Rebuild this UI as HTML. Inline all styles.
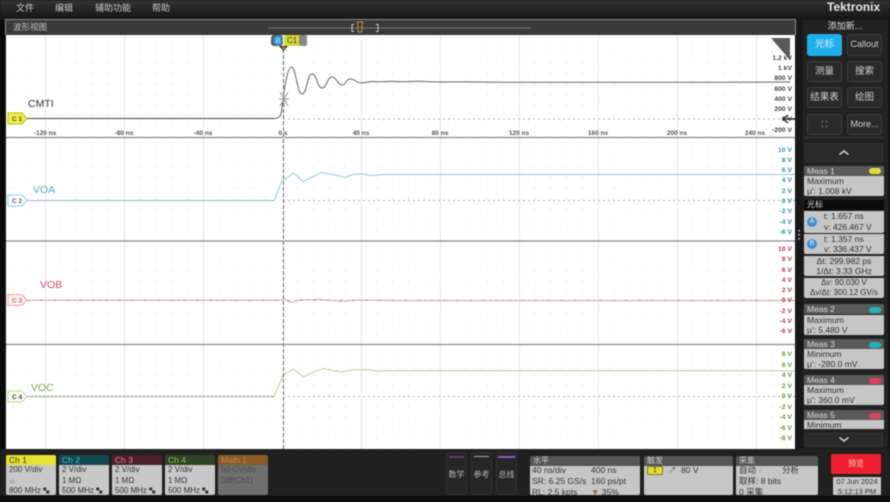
<!DOCTYPE html>
<html><head><meta charset="utf-8"><style>
*{box-sizing:border-box}
html,body{margin:0;padding:0;background:#0b0b0b}
#r{position:relative;width:890px;height:502px;overflow:hidden;background:#181818;font-family:"Liberation Sans","Noto Sans CJK SC",sans-serif;filter:blur(.5px);color:#ddd}
#r div{position:absolute;white-space:nowrap}
.m{top:1px;font-size:9px;color:#c8c8c8;line-height:14px}
.b{width:35px;height:21px;background:#2a2a2a;border:1px solid #3c3c3c;border-radius:3px;color:#cfcfcf;font-size:9.500px;line-height:19px;text-align:center}
.h{left:804px;width:80px;height:10px;background:#5a5a5a;color:#ddd;font-size:8.500px;line-height:10px;padding-left:3px;border-radius:2px 2px 0 0}
.c{left:804px;width:80px;background:#c6c6c6;color:#333;font-size:8.500px;line-height:10px;padding:0 3px;border-radius:0 0 2px 2px}
.pill{left:869px;width:12px;height:6px;border-radius:3px}
.chh{top:455px;height:10px;font-size:8.500px;line-height:10px;padding-left:3px;border-radius:2px 2px 0 0}
.chb{top:465px;height:30px;background:#c8c8c8;color:#333;font-size:8px;line-height:10.500px;padding:0 3px;border-radius:0 0 2px 2px}
.sb{top:452px;width:21px;height:43px;background:#262626;border:1px solid #333;border-radius:3px;color:#bbb;font-size:8px;text-align:center;line-height:43px}
.bh{top:456px;height:10px;background:#555;color:#ccc;font-size:8px;line-height:10px;padding-left:3px;border-radius:2px 2px 0 0}
.bb{top:466px;height:29px;background:#c6c6c6;color:#333;font-size:8.500px;line-height:11px;border-radius:0 0 2px 2px;overflow:hidden}
</style></head><body><div id="r">
<div style="left:0;top:0;width:890px;height:19px;background:linear-gradient(#333,#161616)"></div>
<div class="m" style="left:16px">文件</div><div class="m" style="left:55px">编辑</div><div class="m" style="left:95px">辅助功能</div><div class="m" style="left:152px">帮助</div>
<div style="left:827px;top:0;font-size:12px;font-weight:bold;color:#e8e8e8;line-height:15px">Tektronix</div>
<div style="left:5px;top:19px;width:791px;height:16px;background:#3a3a3a;border:1px solid #8a8a8a;border-bottom:0"></div>
<div style="left:13px;top:22px;font-size:8.500px;line-height:11px;color:#c4c4c4">波形视图</div>

<svg style="position:absolute;left:0;top:0" width="890" height="502" viewBox="0 0 890 502">
<defs><pattern id="d" x="13" y="42" width="15.800" height="10.400" patternUnits="userSpaceOnUse"><rect width="1" height="1" fill="#d8d8d8"/></pattern></defs>
<line x1="268" y1="28" x2="531" y2="28" stroke="#777" stroke-width="1"/>
<path d="M354 24.500h-2v7h2M376 24.500h2v7h-2" fill="none" stroke="#ccc"/>
<path d="M357 22h6l-1 3v7h-4v-7z" fill="none" stroke="#c98a3a" stroke-width="1"/>
<rect x="6" y="35" width="789" height="414" fill="#fff"/>
<rect x="6" y="35" width="789" height="414" fill="url(#d)"/>
<g stroke="#e6e6e6" stroke-width="1"><path d="M45.500 35V449M124.500 35V449M203.500 35V449M361.500 35V449M440.500 35V449M519.500 35V449M598.500 35V449M677.500 35V449M756.500 35V449"/></g>
<g stroke="#8c8c8c" stroke-width="1.200"><path d="M6 137.500H795M6 241H795M6 344.500H795"/></g>
<path d="M6 449.500H795" stroke="#d6d6d6"/>
<g stroke="#999" stroke-width=".8" stroke-dasharray="2 3"><path d="M283 119H795M283 200.500H795M283 396.500H795"/></g>
<path d="M27 118.500H275C280 118 281 116 282 108C284 92 287 67 291.500 67C296 67 297 94 302 94C307 94 307 74 312 74C317 74 317 88 322 88C327 88 327 77 332 77C337 77 337 85 342 85C346 85 346 79 350 79C355 79 356 83 362 83C366 83 368 81 373 81.500C380 82.500 385 81 395 81.500C405 82.500 415 80.500 425 81.500C440 82.500 460 81.500 480 82C520 82.500 560 82 600 82.300C680 82 720 82.500 790 82" fill="none" stroke="#666" stroke-width="1"/>
<path d="M27 118.500H275" fill="none" stroke="#333" stroke-width="1" stroke-dasharray="3 1"/>
<path d="M27 200.500H274L282 180.500L285 179.500L293.500 173L303.500 181.500L310 178L322 172.500L335 175L345 177.500L353 174.500L362 174L372 175.500L385 174.500L400 174.500C500 175 600 174 795 174.500" fill="none" stroke="#8ccdd6" stroke-width="1"/>
<path d="M27 200.500H274" fill="none" stroke="#999" stroke-width=".7" stroke-dasharray="2 2"/>
<path d="M27 300.300H280L284 299L290 302L295 301.500L300 300L320 299.500L340 301L360 300L400 300.500H795" fill="none" stroke="#e2a0a6" stroke-width="1"/>
<path d="M27 300.300H795" fill="none" stroke="#b06a72" stroke-width=".6" stroke-dasharray="3 5 1 4"/>
<path d="M27 396.500H274L283 375.500L293.500 369L303.500 377L311 373L323 368.500L341 372L353 370L365 369.500L378 371L392 370.500C500 371 650 370 795 371" fill="none" stroke="#b6d09e" stroke-width="1"/>
<path d="M27 396.500H274" fill="none" stroke="#667" stroke-width=".7" stroke-dasharray="2 2"/>
<path d="M283.500 47V449" stroke="#666" stroke-width="1"/>
<path d="M283.500 47V449" stroke="#eee" stroke-width="1" stroke-dasharray="2 4"/>
<path d="M280 92L288 106M288 92L280 106M284 91V107M279 99H289" stroke="#9a9a9a" stroke-width="1"/>
<path d="M279 46H288L283.500 51z" fill="#222"/><path d="M281 47H286L283.500 50z" fill="#e0762a"/>
<rect x="271" y="35" width="12" height="11" rx="3" fill="#5a5a5a"/><circle cx="278" cy="40.500" r="5" fill="#2e9ad8"/><text x="278" y="43" font-size="7" fill="#cdeafc" text-anchor="middle" font-family="Liberation Sans">B</text>
<rect x="284" y="35" width="16" height="11" rx="2" fill="#d8d830"/><rect x="299" y="35" width="8" height="11" rx="2" fill="#888"/><text x="287" y="43" font-size="8" fill="#444" font-family="Liberation Sans">C1</text>
<path d="M771 38H790V60z" fill="#5a5a5a"/>
<path d="M8 113H22L27 118.500L22 124H8z" fill="#f0f040" stroke="#b9b928"/>
<path d="M8 195H22L27 200.500L22 206H8z" fill="#fff" stroke="#7fd6df"/>
<path d="M8 294.500H22L27 300L22 305.500H8z" fill="#fdeef0" stroke="#eda5ae"/>
<path d="M8 391H22L27 396.500L22 402H8z" fill="#f6fbef" stroke="#bcdc9e"/>
<path d="M796 119H783M788 115L783 119L788 123" fill="none" stroke="#222" stroke-width="1.400"/>
<g fill="#aaa"><rect x="798" y="230" width="2" height="1.500"/><rect x="798" y="234" width="2" height="1.500"/><rect x="798" y="238" width="2" height="1.500"/></g>
<g font-family="Liberation Sans" text-anchor="middle" font-size="6.500" font-weight="bold" fill="#555">
<text x="17" y="121" fill="#444">C 1</text><text x="17" y="203" fill="#555">C 2</text><text x="17" y="302.500" fill="#c06a74">C 3</text><text x="17" y="399" fill="#444">C 4</text>
<text x="45" y="135">-120 ns</text><text x="124" y="135">-80 ns</text><text x="203" y="135">-40 ns</text><text x="283" y="135">0 s</text><text x="361" y="135">40 ns</text><text x="440" y="135">80 ns</text><text x="519" y="135">120 ns</text><text x="598" y="135">160 ns</text><text x="677" y="135">200 ns</text><text x="755" y="135">240 ns</text>
</g>
<g font-family="Liberation Sans" text-anchor="end" font-size="6.800" font-weight="bold">
<g fill="#444"><text x="792" y="60">1.2 kV</text><text x="792" y="70">1 kV</text><text x="792" y="80">800 V</text><text x="792" y="91">600 V</text><text x="792" y="101">400 V</text><text x="792" y="111">200 V</text><text x="792" y="121">0 V</text><text x="792" y="132">-200 V</text></g>
<g fill="#3c8c98"><text x="792" y="152">10 V</text><text x="792" y="162">8 V</text><text x="792" y="172">6 V</text><text x="792" y="182">4 V</text><text x="792" y="193">2 V</text><text x="792" y="203">0 V</text><text x="792" y="213">-2 V</text><text x="792" y="224">-4 V</text><text x="792" y="234">-6 V</text></g>
<g fill="#a8404e"><text x="792" y="251">10 V</text><text x="792" y="261">8 V</text><text x="792" y="272">6 V</text><text x="792" y="282">4 V</text><text x="792" y="292">2 V</text><text x="792" y="302">0 V</text><text x="792" y="313">-2 V</text><text x="792" y="323">-4 V</text><text x="792" y="333">-6 V</text></g>
<g fill="#6a9440"><text x="792" y="356">8 V</text><text x="792" y="367">6 V</text><text x="792" y="377">4 V</text><text x="792" y="388">2 V</text><text x="792" y="398">0 V</text><text x="792" y="409">-2 V</text><text x="792" y="419">-4 V</text><text x="792" y="430">-6 V</text><text x="792" y="440">-8 V</text></g>
</g>
<g font-family="Liberation Sans" font-size="10.500">
<text x="28" y="107" fill="#333">CMTI</text><text x="33" y="193" fill="#45b0bd">VOA</text><text x="40" y="288" fill="#c8505e">VOB</text><text x="31" y="391" fill="#76a548">VOC</text>
</g>
<rect x="803" y="20" width="85" height="428" fill="#222" rx="2"/>
</svg>

<div style="left:803px;top:20px;width:84px;text-align:center;font-size:9px;line-height:12px;color:#ddd">添加新...</div>
<div class="b" style="left:807px;top:34px;height:22px;background:#1fb0ec;border-color:#1fb0ec;color:#dff4ff">光标</div>
<div class="b" style="left:847px;top:34px;height:22px;font-size:9px">Callout</div>
<div class="b" style="left:807px;top:61px">测量</div><div class="b" style="left:847px;top:61px">搜索</div>
<div class="b" style="left:807px;top:87px">结果表</div><div class="b" style="left:847px;top:87px">绘图</div>
<div class="b" style="left:807px;top:114px;font-size:8px">⛶</div><div class="b" style="left:847px;top:114px;font-size:9px">More...</div>
<div style="left:804px;top:137px;width:80px;height:1px;background:#3c3c3c"></div>
<div style="left:805px;top:143px;width:78px;height:19px;background:#2a2a2a;border-radius:2px;border:1px solid #333"></div>
<svg style="position:absolute;left:838px;top:149px" width="12" height="7"><path d="M1.500 5.500L6 2L10.500 5.500" fill="none" stroke="#ccc" stroke-width="1.600"/></svg>

<div class="h" style="top:166px">Meas 1</div><div class="pill" style="top:168px;background:#e3de2e"></div>
<div class="c" style="top:176px;height:20px">Maximum<br>µ': 1.008 kV</div>
<div style="left:804px;top:200px;width:80px;height:10px;background:#0c0c0c;color:#ddd;font-size:8px;line-height:10px;padding-left:3px">光标</div>
<div class="c" style="top:211px;height:22px;padding-left:20px;line-height:10.500px">t: 1.657 ns<br>v: 426.467 V</div>
<div class="c" style="top:234px;height:20px;padding-left:20px">t: 1.357 ns<br>v: 336.437 V</div>
<div style="left:807px;top:217px;width:10px;height:10px;border-radius:5px;background:#3f8fd0;color:#d8eeff;font-size:7px;line-height:10px;text-align:center">A</div>
<div style="left:807px;top:239px;width:10px;height:10px;border-radius:5px;background:#3f8fd0;color:#d8eeff;font-size:7px;line-height:10px;text-align:center">B</div>
<div class="c" style="top:256px;height:20px;text-align:center">Δt: 299.982 ps<br>1/Δt: 3.33 GHz</div>
<div class="c" style="top:278px;height:20px;text-align:center;font-size:8px">Δv: 90.030 V<br>Δv/Δt: 300.12 GV/s</div>

<div class="h" style="top:304px">Meas 2</div><div class="pill" style="top:307px;background:#1fb3bf"></div>
<div class="c" style="top:315px;height:20px">Maximum<br>µ': 5.480 V</div>
<div class="h" style="top:339px">Meas 3</div><div class="pill" style="top:342px;background:#1fb3bf"></div>
<div class="c" style="top:349px;height:20px">Minimum<br>µ': -280.0 mV</div>
<div class="h" style="top:375px">Meas 4</div><div class="pill" style="top:378px;background:#e0405e"></div>
<div class="c" style="top:385px;height:20px">Maximum<br>µ': 360.0 mV</div>
<div class="h" style="top:410px">Meas 5</div><div class="pill" style="top:413px;background:#e0405e"></div>
<div class="c" style="top:420px;height:9px;border-radius:0;overflow:hidden">Minimum</div>
<div style="left:805px;top:433px;width:78px;height:14px;background:#2a2a2a;border-radius:2px;border:1px solid #333"></div>
<svg style="position:absolute;left:838px;top:436px" width="12" height="7"><path d="M1.500 1.500L6 5L10.500 1.500" fill="none" stroke="#ccc" stroke-width="1.600"/></svg>

<div style="left:0;top:449px;width:890px;height:53px;background:#202020"></div>
<div style="left:0;top:496px;width:890px;height:6px;background:#0c0c0c"></div>
<div class="chh" style="left:6px;width:50px;background:#e6e230;color:#333">Ch 1</div>
<div class="chb" style="left:6px;width:50px">200 V/div<br><span style="color:#777">⌓</span><br>800 MHz <span style="font-size:6px">▚</span></div>
<div class="chh" style="left:59px;width:50px;background:#134a50;color:#4cc0cc">Ch 2</div>
<div class="chb" style="left:59px;width:50px">2 V/div<br>1 MΩ<br>500 MHz <span style="font-size:6px">▚</span></div>
<div class="chh" style="left:112px;width:50px;background:#4c2028;color:#e88a9a">Ch 3</div>
<div class="chb" style="left:112px;width:50px">2 V/div<br>1 MΩ<br>500 MHz <span style="font-size:6px">▚</span></div>
<div class="chh" style="left:165px;width:50px;background:#2e4422;color:#86c850">Ch 4</div>
<div class="chb" style="left:165px;width:50px">2 V/div<br>1 MΩ<br>500 MHz <span style="font-size:6px">▚</span></div>
<div class="chh" style="left:218px;width:50px;background:#8a5a24;color:#b98a50">Math 1</div>
<div class="chb" style="left:218px;width:50px;background:#6f6f6f;color:#4a4a4a">50 GV/div<br>Diff(Ch1)</div>

<div class="sb" style="left:446px">数学</div><div style="left:449px;top:456px;width:15px;height:2px;background:#5a3a7a"></div>
<div class="sb" style="left:471px">参考</div><div style="left:474px;top:456px;width:15px;height:1px;background:#aaa"></div>
<div class="sb" style="left:496px">总线</div><div style="left:498px;top:456px;width:17px;height:2px;background:#8a5ac8"></div>

<div class="bh" style="left:530px;width:110px">水平</div>
<div class="bb" style="left:530px;width:110px"><div style="left:2px;top:-1px">40 ns/div<br>SR: 6.25 GS/s<br>RL: 2.5 kpts</div><div style="left:61px;top:-1px">400 ns<br>160 ps/pt<br><span style="color:#a06a20">▼</span> 35%</div></div>
<div class="bh" style="left:644px;width:89px">触发</div>
<div class="bb" style="left:644px;width:89px"><div style="left:3px;top:0;width:16px;height:9px;background:#e3de2e;border:1px solid #7a7a20;border-radius:2px;font-size:7px;line-height:8px;text-align:center">1</div><div style="left:24px;top:-1px;color:#4a6aa0">↗</div><div style="left:37px;top:-1px">80 V</div></div>
<div class="bh" style="left:736px;width:82px">采集</div>
<div class="bb" style="left:736px;width:82px"><div style="left:3px;top:-1px">自动 ·<br>取样: 8 bits<br>0 采集</div><div style="left:46px;top:-1px">分析</div></div>

<div style="left:831px;top:454px;width:50px;height:20px;background:#f0202c;border-radius:2px;color:#f4c8c8;font-size:8px;line-height:20px;text-align:center">预览</div>
<div style="left:833px;top:477px;width:48px;height:18px;background:#c6c6c6;border-radius:1px;color:#333;font-size:7.500px;line-height:10px;text-align:center;overflow:hidden">07 Jun 2024<br>5:12:13 PM</div>
<div style="left:0;top:20px;width:5px;height:429px;background:#0a0a0a"></div>
</div></body></html>
